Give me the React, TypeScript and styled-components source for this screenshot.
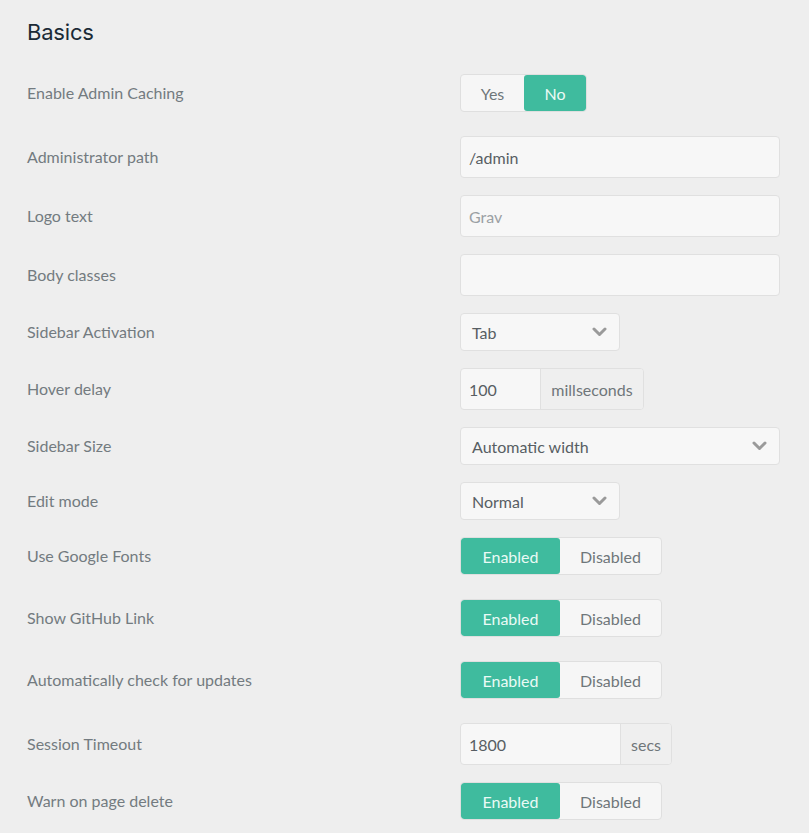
import styled, {createGlobalStyle} from "styled-components";

const GlobalStyle = createGlobalStyle`
	html, body {
		margin: 0;
		padding: 0;
		background: #eeeeee;
	}
	body {
		font-family: Lato, "Open Sans", sans-serif;
		-webkit-font-smoothing: antialiased;
	}
`;

const Page = styled.div`
	width: 809px;
	min-height: 833px;
	box-sizing: border-box;
	padding: 0 29px 0 27px;
	background: #eeeeee;
`;
const Title = styled.h1`
	margin: 0;
	padding-top: 18px;
	font-family: Inter, "Noto Sans", sans-serif;
	font-size: 22px;
	line-height: 28px;
	font-weight: 400;
	letter-spacing: -0.2px;
	color: #1b2a36;
`;
const Form = styled.div`
	display: flex;
	flex-direction: column;
	gap: 17px;
	margin-top: 28px;
`;
const Row = styled.div<{$spaced?: boolean}>`
	display: grid;
	grid-template-columns: 433px 320px;
	align-items: center;
	padding-bottom: ${({$spaced}) => ($spaced ? "7px" : "0")};
`;
const Label = styled.div`
	font-size: 16px;
	color: #737b80;
	line-height: 20px;
`;
const Toggle = styled.div`
	display: inline-flex;
	justify-self: start;
	height: 38px;
	box-sizing: border-box;
	border: 1px solid #dfdfdf;
	border-radius: 4px;
	background: #f6f6f6;
	overflow: hidden;
`;
const ToggleOption = styled.div<{$active?: boolean; $w: number}>`
	width: ${({$w}) => $w}px;
	display: flex;
	align-items: center;
	justify-content: center;
	font-size: 16px;
	color: ${({$active}) => ($active ? "#eafaf5" : "#6f767a")};
	background: ${({$active}) => ($active ? "#3fbb9e" : "transparent")};
	border-radius: ${({$active}) => ($active ? "3px" : "0")};
`;
const TextInput = styled.div<{$placeholder?: boolean; $w?: number}>`
	width: ${({$w}) => ($w ? `${$w}px` : "100%")};
	height: 42px;
	box-sizing: border-box;
	display: flex;
	align-items: center;
	padding: 0 8px;
	border: 1px solid #e0e0e0;
	border-radius: 4px;
	background: #f7f7f7;
	font-size: 16px;
	color: ${({$placeholder}) => ($placeholder ? "#9ba0a4" : "#575e63")};
`;
const Select = styled.div<{$w?: number}>`
	width: ${({$w}) => ($w ? `${$w}px` : "100%")};
	height: 38px;
	box-sizing: border-box;
	display: flex;
	align-items: center;
	justify-content: space-between;
	padding: 0 12px 0 11px;
	border: 1px solid #e0e0e0;
	border-radius: 4px;
	background: #f7f7f7;
	font-size: 16px;
	color: #575e63;
`;
const AddonGroup = styled.div`
	display: inline-flex;
	justify-self: start;
	height: 42px;
	box-sizing: border-box;
	border: 1px solid #e0e0e0;
	border-radius: 4px;
	background: #f7f7f7;
	overflow: hidden;
`;
const AddonValue = styled.div<{$w: number}>`
	width: ${({$w}) => $w}px;
	box-sizing: border-box;
	display: flex;
	align-items: center;
	padding: 0 8px;
	font-size: 16px;
	color: #575e63;
`;
const Addon = styled.div<{$w: number}>`
	width: ${({$w}) => $w}px;
	box-sizing: border-box;
	display: flex;
	align-items: center;
	justify-content: center;
	border-left: 1px solid #e0e0e0;
	background: #efefef;
	font-size: 16px;
	color: #6f767a;
`;

const Chevron = () => (
	<svg width="15" height="10" viewBox="0 0 15 10">
		<polyline points="2,2 7.5,7.5 13,2" fill="none" stroke="#9a9a9a" strokeWidth="3" strokeLinecap="round" strokeLinejoin="round" />
	</svg>
);

const EnabledToggle = () => (
	<Toggle>
		<ToggleOption $active $w={99}>Enabled</ToggleOption>
		<ToggleOption $w={101}>Disabled</ToggleOption>
	</Toggle>
);

const App = () => {
	return (
		<Page>
			<GlobalStyle />
			<Title>Basics</Title>
			<Form>
				<Row $spaced>
					<Label>Enable Admin Caching</Label>
					<Toggle>
						<ToggleOption $w={63}>Yes</ToggleOption>
						<ToggleOption $active $w={62}>No</ToggleOption>
					</Toggle>
				</Row>
				<Row>
					<Label>Administrator path</Label>
					<TextInput>/admin</TextInput>
				</Row>
				<Row>
					<Label>Logo text</Label>
					<TextInput $placeholder>Grav</TextInput>
				</Row>
				<Row>
					<Label>Body classes</Label>
					<TextInput />
				</Row>
				<Row>
					<Label>Sidebar Activation</Label>
					<Select $w={160}>
						Tab
						<Chevron />
					</Select>
				</Row>
				<Row>
					<Label>Hover delay</Label>
					<AddonGroup>
						<AddonValue $w={79}>100</AddonValue>
						<Addon $w={103}>millseconds</Addon>
					</AddonGroup>
				</Row>
				<Row>
					<Label>Sidebar Size</Label>
					<Select>
						Automatic width
						<Chevron />
					</Select>
				</Row>
				<Row>
					<Label>Edit mode</Label>
					<Select $w={160}>
						Normal
						<Chevron />
					</Select>
				</Row>
				<Row $spaced>
					<Label>Use Google Fonts</Label>
					<EnabledToggle />
				</Row>
				<Row $spaced>
					<Label>Show GitHub Link</Label>
					<EnabledToggle />
				</Row>
				<Row $spaced>
					<Label>Automatically check for updates</Label>
					<EnabledToggle />
				</Row>
				<Row>
					<Label>Session Timeout</Label>
					<AddonGroup>
						<AddonValue $w={159}>1800</AddonValue>
						<Addon $w={51}>secs</Addon>
					</AddonGroup>
				</Row>
				<Row $spaced>
					<Label>Warn on page delete</Label>
					<EnabledToggle />
				</Row>
			</Form>
		</Page>
	);
};

export default App;
